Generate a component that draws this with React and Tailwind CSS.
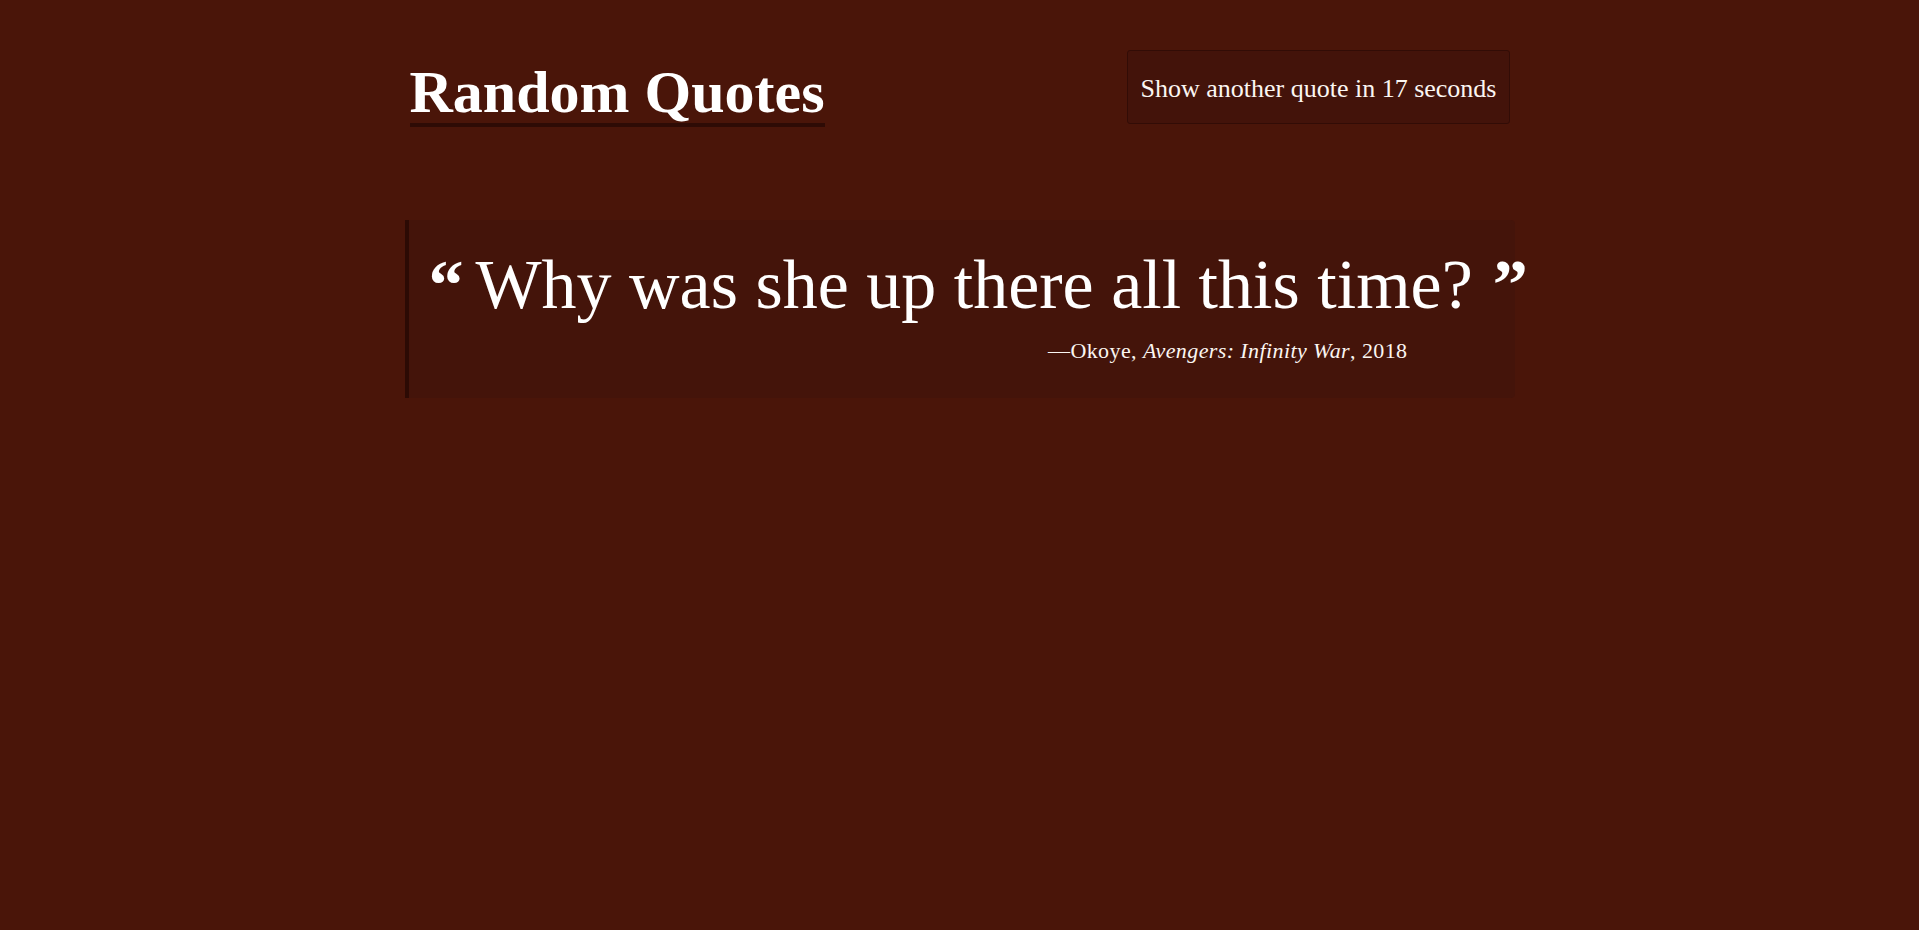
import React, { useState } from 'react';

const quote = {
  text: 'Why was she up there all this time?',
  author: 'Okoye',
  source: 'Avengers: Infinity War',
  year: 2018,
};

export default function App() {
  // seconds until the next quote (kept still for the picture)
  const [seconds] = useState(17);

  return (
    <div className="min-h-screen w-full bg-[#4a1509] text-white font-['Liberation_Serif','DejaVu_Serif',serif]">
      <div className="mx-auto w-[1100px]">
        {/* header */}
        <div className="flex items-start justify-between pt-[50px]">
          <h1 className="mt-[12px] text-[60px] font-bold leading-none pb-px border-b-4 border-[#2e0b05]">
            Random Quotes
          </h1>
          <button className="h-[74px] px-3 pt-[3px] flex items-center rounded-[3px] border border-[#320c06] bg-[#43130a] text-[26px] leading-none text-[#fbf6f2]">
            Show another quote in {seconds} seconds
          </button>
        </div>

        {/* quote */}
        <div className="mt-[93px] -mx-[5px] rounded-r-[4px] border-l-4 border-[#2c0a04] bg-[#44140a] pt-[30px] pb-[36px] pl-5">
          <p className="whitespace-nowrap text-[70px] leading-none">
            <span className="font-bold mr-[12px]">“</span>
            {quote.text}
            <span className="font-bold ml-[20px]">”</span>
          </p>
          <div className="mt-[20px] flex justify-end pr-[107px]">
            <p className="text-[22px] tracking-[0.4px] leading-none text-[#fbf6f2]">
              —{quote.author}, <em>{quote.source}</em>, {quote.year}
            </p>
          </div>
        </div>
      </div>
    </div>
  );
}
